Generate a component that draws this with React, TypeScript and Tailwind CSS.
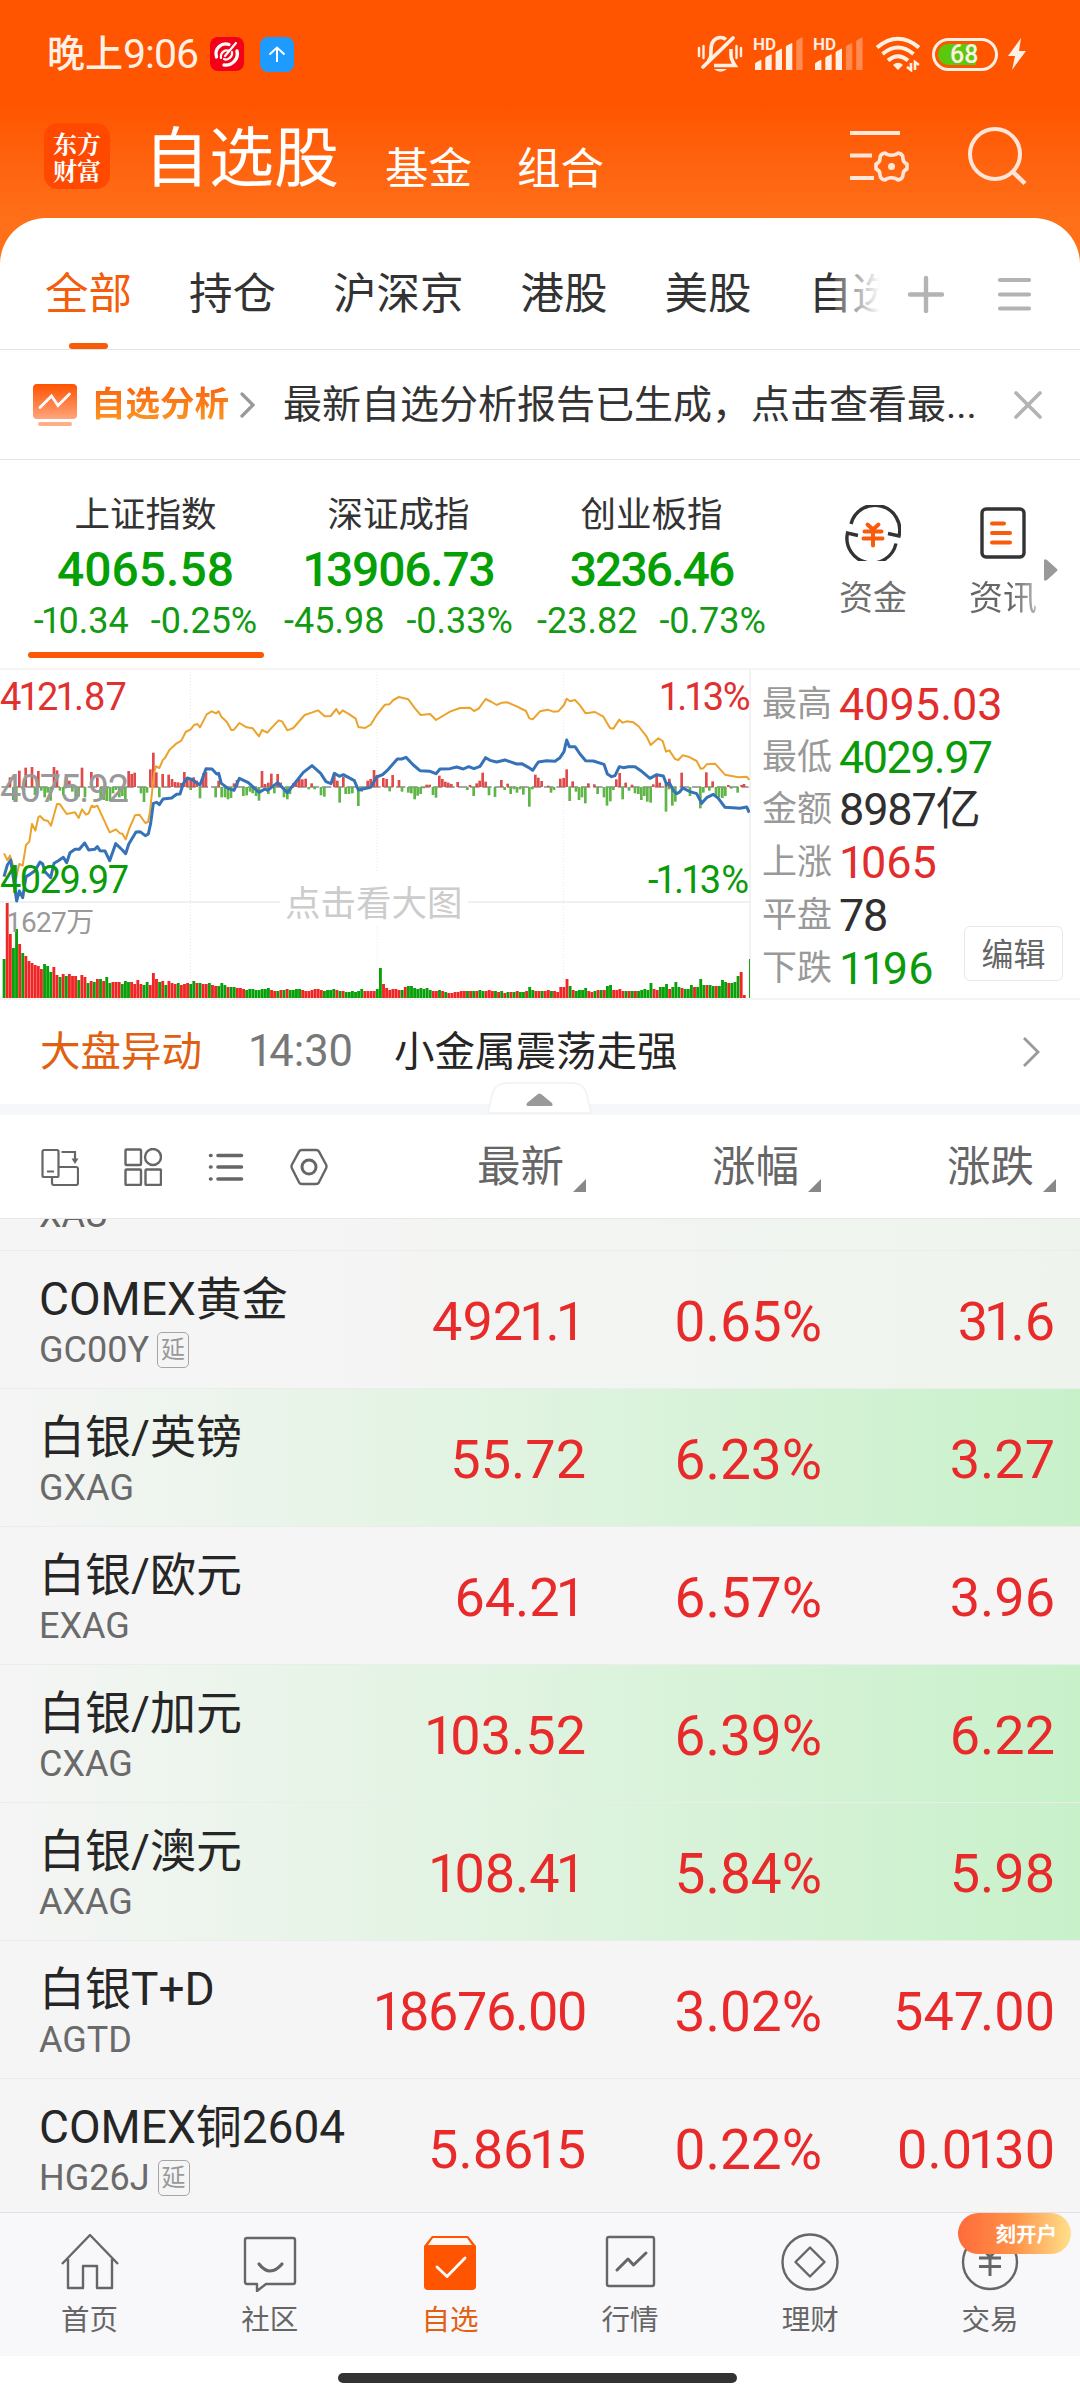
import type { ReactNode } from "react";
import clsx from "clsx";

const tabs = ["全部", "持仓", "沪深京", "港股", "美股", "自选"];

const indices = [
  { name: "上证指数", value: "4065.58", change: "-10.34", pct: "-0.25%", tracking: "tracking-normal", active: true },
  { name: "深证成指", value: "13906.73", change: "-45.98", pct: "-0.33%", tracking: "tracking-[-0.025em]", active: false },
  { name: "创业板指", value: "3236.46", change: "-23.82", pct: "-0.73%", tracking: "tracking-[-0.04em]", active: false },
];

const summary = [
  { label: "最高", value: "4095.03", color: "text-[#e22d2d]" },
  { label: "最低", value: "4029.97", color: "text-[#0a9a0a] tracking-[-0.035em]" },
  { label: "金额", value: "8987亿", color: "text-[#2f2f2f] tracking-[-0.025em]" },
  { label: "上涨", value: "1065", color: "text-[#e22d2d]" },
  { label: "平盘", value: "78", color: "text-[#2f2f2f] tracking-[-0.03em]" },
  { label: "下跌", value: "1196", color: "text-[#0a9a0a]" },
];

const rows = [
  { name: "COMEX黄金", code: "GC00Y", delayed: true, last: "4921.1", pct: "0.65%", diff: "31.6", bg: "bg-linear-to-r from-[#f5f5f5] from-20% to-[#eef4ed]" },
  { name: "白银/英镑", code: "GXAG", last: "55.72", pct: "6.23%", diff: "3.27", bg: "bg-linear-to-r from-[#f5f5f5] to-[#c8f1ca]" },
  { name: "白银/欧元", code: "EXAG", last: "64.21", pct: "6.57%", diff: "3.96", bg: "bg-[#f5f5f6]" },
  { name: "白银/加元", code: "CXAG", last: "103.52", pct: "6.39%", diff: "6.22", bg: "bg-linear-to-r from-[#f5f5f5] to-[#c8f1ca]" },
  { name: "白银/澳元", code: "AXAG", last: "108.41", pct: "5.84%", diff: "5.98", bg: "bg-linear-to-r from-[#f5f5f5] to-[#c8f1ca]" },
  { name: "白银T+D", code: "AGTD", last: "18676.00", pct: "3.02%", diff: "547.00", tight: true, bg: "bg-[#f5f5f6]" },
  { name: "COMEX铜2604", code: "HG26J", delayed: true, last: "5.8615", pct: "0.22%", diff: "0.0130", bg: "bg-[#f5f5f5]" },
];

// Chart data is kept at 3x, baseline of the deviation bars is y=381
const avgLine =
  "12,580 22,600 30,587 38,612 48,655 58,612 68,617 78,555 88,545 96,492 106,512 115,472 120,468 132,480 144,483 153,497 171,432 180,433 200,462 225,457 236,474 246,448 258,464 266,460 275,437 283,441 292,437 329,517 348,508 360,520 367,521 377,538 388,505 405,466 418,464 436,489 444,486 450,455 462,340 468,319 478,324 489,299 495,294 508,270 530,250 544,242 557,216 572,208 582,195 592,192 600,202 620,163 635,154 648,160 656,154 664,170 680,185 694,210 702,209 718,189 740,202 758,205 777,229 786,210 802,218 816,202 836,181 846,184 862,211 880,204 914,165 935,158 954,151 974,169 992,168 1009,147 1018,162 1028,151 1048,163 1067,176 1075,201 1095,204 1112,194 1130,165 1155,134 1168,133 1180,120 1197,111 1225,118 1245,145 1262,165 1290,162 1308,180 1350,155 1380,144 1410,143 1422,153 1436,146 1457,117 1475,126 1490,135 1506,128 1522,127 1550,139 1578,153 1588,175 1598,178 1620,154 1643,149 1660,155 1675,154 1692,135 1700,116 1710,124 1725,120 1740,136 1757,160 1785,156 1810,170 1830,204 1840,206 1858,179 1868,188 1880,184 1900,187 1915,198 1940,230 1952,255 1975,235 1988,243 1998,275 2008,271 2025,297 2035,300 2048,286 2065,290 2090,303 2102,326 2110,325 2120,313 2145,311 2175,344 2215,352 2240,350 2248,360";

const priceLine =
  "12,650 22,615 32,600 38,640 50,723 58,693 68,713 78,650 90,643 105,632 120,606 128,612 135,635 152,653 162,610 175,602 190,592 200,608 210,578 225,568 238,568 254,549 266,570 284,568 292,560 300,572 315,573 329,602 347,551 367,570 377,581 386,553 408,516 420,515 436,527 445,522 452,490 460,430 470,427 478,434 489,417 515,414 530,403 540,402 550,370 562,354 575,358 600,375 618,326 636,327 650,342 656,340 664,370 684,385 702,391 718,355 745,368 777,397 795,387 803,391 833,368 862,398 910,337 936,317 962,340 978,365 993,371 1003,340 1018,349 1030,344 1063,362 1075,390 1085,388 1112,382 1130,351 1148,344 1165,328 1192,297 1205,297 1218,292 1240,315 1260,332 1290,334 1308,341 1320,327 1350,326 1370,321 1390,327 1406,320 1422,326 1440,319 1457,293 1470,301 1490,306 1515,300 1550,312 1565,311 1585,322 1598,331 1615,306 1640,302 1665,304 1680,293 1692,275 1700,240 1708,260 1725,260 1740,282 1757,302 1780,303 1812,313 1822,342 1835,350 1845,347 1858,320 1870,323 1885,320 1905,320 1925,334 1950,355 1970,344 1990,348 2000,374 2008,368 2020,392 2030,401 2040,395 2048,384 2070,395 2090,401 2105,430 2120,413 2140,403 2155,415 2175,442 2220,445 2240,441 2248,458";

const upBars =
  "30,352 58,332 77,323 96,321 115,333 162,321 171,331 199,352 208,362 246,323 274,336 292,352 386,333 395,342 404,338 451,328 460,278 469,337 488,342 506,344 516,357 525,366 534,367 543,369 553,336 562,353 572,358 581,352 590,362 610,340 618,336 656,362 702,370 711,360 786,333 795,372 805,368 814,341 833,342 842,368 880,370 889,362 898,355 907,358 917,356 935,370 1003,345 1012,362 1030,350 1103,362 1112,357 1122,330 1131,345 1150,354 1160,357 1178,345 1197,360 1280,374 1289,374 1318,347 1327,357 1336,365 1345,368 1354,372 1373,366 1410,375 1430,370 1439,362 1448,338 1457,365 1504,360 1523,371 1606,344 1615,353 1625,363 1645,377 1681,356 1691,354 1700,328 1718,364 1765,370 1783,373 1849,358 1859,339 1877,368 1896,374 1960,373 1970,346 1979,368 1998,371 2008,356 2045,338 2119,337 2138,364 2185,375 2225,375 2232,372";

const downBars =
  "40,420 49,425 68,388 105,405 124,392 134,412 143,398 152,422 180,392 190,405 217,395 227,420 236,410 255,412 302,418 311,420 320,423 330,424 339,400 348,390 358,412 367,408 376,425 423,400 432,426 441,398 478,412 572,390 600,415 647,412 665,412 675,412 684,418 693,414 730,408 740,406 750,395 758,400 768,408 777,422 805,402 823,400 852,412 862,418 870,402 926,388 944,388 963,406 973,410 1019,428 1037,402 1047,402 1057,400 1075,438 1085,395 1169,394 1206,395 1225,398 1234,400 1244,418 1253,407 1262,402 1271,385 1299,405 1308,413 1402,390 1421,408 1467,406 1485,411 1514,390 1532,402 1542,388 1551,398 1560,388 1570,404 1588,440 1597,388 1653,398 1662,390 1709,423 1728,395 1737,420 1746,412 1756,430 1793,402 1812,412 1821,437 1831,424 1840,390 1868,418 1887,392 1905,400 1915,402 1924,420 1933,408 1942,425 1952,428 1998,455 2007,388 2017,437 2026,425 2070,408 2101,445 2110,398 2128,392 2148,405 2157,412 2167,414 2176,408 2194,386 2213,398";

const volume =
  "39g 95r 64r 50g 69g 54r 45g 42r 37r 35r 33r 32r 29r 34g 32g 26g 31r 23r 21g 24r 22g 24r 22r 22r 18g 23r 21r 15g 17r 16g 19r 19g 17r 21g 15g 16r 16r 16r 14g 17g 16g 16r 14r 18r 14r 13g 16g 13r 25r 19r 16g 17r 13g 17r 15r 14r 15g 13r 14r 15r 14g 17g 15r 15g 14r 14r 15g 13r 12r 12g 15g 13g 11r 11g 11g 10r 10r 9r 8g 9g 9g 8g 8g 9g 9g 10g 8r 7r 7g 8r 8g 9r 8g 8g 9g 9g 8r 7r 7r 8r 9r 9r 8r 7g 8g 8g 9g 8r 7g 7r 6g 6g 7g 6g 7g 9g 7r 7r 7r 7r 9g 30g 14r 10r 8r 9r 9r 8r 8g 11r 12g 12g 10g 9g 10g 9g 10g 8g 7r 7r 8g 7r 6g 5r 5r 6r 6r 7r 7r 7g 7r 7g 7r 8g 7g 7r 8r 7r 7g 6r 7g 5r 6g 6r 6g 7r 6g 6g 7r 11g 8g 7r 7r 7g 7r 8r 7g 7r 6r 11r 11r 19r 12g 8r 7g 8g 8g 10g 7r 6r 7g 8r 8g 8r 12g 13g 8r 8r 9r 7r 7g 7r 7g 7r 7g 8g 9g 8g 15g 9r 8r 11g 11g 14g 9r 11g 16g 11g 10r 9g 9g 13g 11r 11g 19g 13g 13r 13g 12g 12r 12g 18g 16g 15r 15g 16g 22g 26r 3r 0r 39g"
    .split(" ")
    .map((v) => ({ h: parseInt(v), up: v.endsWith("r") }));

const pairs = (s: string) => s.split(" ").map((p) => p.split(",").map(Number));

// Tightens the spacing round the figure 1 and after "7." so that numbers read as proportional
function Num({ children }: { children: string }) {
  return (
    <>
      {children.split(/([^1](?=1)|1(?=.)|7(?=\.))/).map((part, i) =>
        i % 2 === 1 ? (
          <span key={i} className="tracking-[-0.075em]">
            {part}
          </span>
        ) : (
          part
        ),
      )}
    </>
  );
}

function Signal({ strength }: { strength: number }) {
  return (
    <div className="relative h-9 w-[50px]">
      <span className="absolute top-0 left-0 text-[17px] leading-4 font-semibold">HD</span>
      <svg className="absolute top-0 left-0" width="50" height="36" viewBox="0 0 50 36">
        {[0, 1, 2, 3, 4].map((i) => (
          <path
            key={i}
            d={`M${2 + i * 10.3} 34V${28 - i * 5.6}q0-1 1-1.6l4.4-2.4q1-.4 1 .8V34z`}
            fill="#fff0e6"
            opacity={i < strength ? 1 : 0.35}
          />
        ))}
      </svg>
    </div>
  );
}

function StatusBar() {
  return (
    <div className="flex h-[108px] items-center pr-[54px] pl-[47px] text-[#fff0e6]">
      <div className="flex w-[163px] items-center leading-none">
        <span className="text-[38px] font-medium">晚上</span>
        <span className="text-[41px] tracking-tight">9:06</span>
      </div>
      <svg width="34" height="34" viewBox="0 0 34 34">
        <rect width="34" height="34" rx="8" fill="#f40018" />
        <g fill="none" stroke="#fff" strokeLinecap="round">
          <path d="M6.500 20C4 11 12 5 19 7.500" strokeWidth="3.200" />
          <path d="M27 14c2 8-5 15-13 14" strokeWidth="3.400" />
          <path d="M11 21c-1-6 5-9 8-7M22 15c1 5-5 9-8 7M15 19L26 6" strokeWidth="2.200" />
        </g>
      </svg>
      <svg className="ml-4" width="34" height="35" viewBox="0 0 34 35">
        <rect width="34" height="35" rx="8" fill="#1e9bff" />
        <path d="M17 25V10.500M9.500 17.500L17 10.500l7.500 7" fill="none" stroke="#fff" strokeWidth="2" />
      </svg>

      <svg className="ml-auto" width="46" height="38" viewBox="0 0 46 38" fill="none" stroke="#fff0e6">
        <path d="M11 26.500c3-3 3-6 3-12C14 7 18 2.500 23.500 2.500c2 0 4 .7 5.500 2M34 14v6c0 4 1 6 4 10.500H17" strokeWidth="3.600" />
        <path d="M36 3L6 32" strokeWidth="3.800" strokeLinecap="round" />
        <path d="M2 13v8M6.500 11v12M39.500 11v12M44 13v8" strokeWidth="2.400" strokeLinecap="round" />
        <path d="M17 34h13q-6.500 5.500-13 0z" fill="#fff0e6" stroke="none" />
      </svg>
      <div className="ml-[10px] flex gap-[10px]">
        <Signal strength={4} />
        <Signal strength={3} />
      </div>
      <svg className="ml-[12px]" width="46" height="36" viewBox="0 0 46 36" fill="none" stroke="#fff0e6" strokeWidth="4">
        <path d="M2 11.500Q23-6 44 11.500M7.500 18q15.500-13 31 0M13 24.500q10-8.500 20 0" />
        <path d="M23 34l-5-5q5-4.500 10 0z" fill="#fff0e6" stroke="none" />
        <path d="M36 27v7l-4-3M40 34v-8l4 3" strokeWidth="2.600" />
      </svg>
      <div className="ml-[11px] flex h-[33px] w-[66px] items-center rounded-full border-[3px] border-[#fff0e6] p-[3px]">
        <div className="h-[21px] w-[38px] rounded-l-full bg-[#5cc80c]" />
        <span className="-ml-[26px] text-[25px] leading-none font-medium">68</span>
      </div>
      <svg className="ml-[10px]" width="18" height="32" viewBox="0 0 18 32" fill="#fff0e6">
        <path d="M13 0L0 18h7L4 32 18 13h-7z" />
      </svg>
    </div>
  );
}

function Header() {
  return (
    <div className="h-[264px] bg-linear-to-b from-[#ff5500] from-40% to-[#ff7019] to-85%">
      <StatusBar />
      <div className="flex h-[96px] items-center pr-[53px] pl-[44px] text-white">
        <div className="flex h-[66px] w-[66px] flex-col items-center justify-center rounded-[14px] bg-[#ff4800] font-[family-name:'Noto_Serif_CJK_SC','Noto_Sans_CJK_SC',serif] text-[24px] leading-[27px] font-bold">
          <span>东方</span>
          <span>财富</span>
        </div>
        <span className="mt-[6px] ml-[34px] text-[65px] leading-none">自选股</span>
        <span className="mt-[27px] ml-[46px] text-[43.500px] leading-none">基金</span>
        <span className="mt-[27px] ml-[45px] text-[43.500px] leading-none">组合</span>
        <svg className="ml-auto" width="60" height="56" viewBox="0 0 60 56" fill="none" stroke="#ffe6d8" strokeWidth="4">
          <path d="M1 5h50M1 27.500h22M1 50h24" />
          <path
            d="M36 25c3 3 10 3 13 0 3.500.5 5 2.500 5 5.500 0 3 1.500 4.500 4 5.500v5c-2.500 1-4 2.500-4 5.500 0 3-1.500 5-5 5.500-3-3-10-3-13 0-3.500-.5-5-2.500-5-5.500 0-3-1.500-4.500-4-5.500v-5c2.500-1 4-2.500 4-5.500 0-3 1.500-5 5-5.500z"
            strokeWidth="3.600"
            strokeLinejoin="round"
          />
          <circle cx="42.500" cy="38.500" r="3.500" fill="#ffe6d8" stroke="none" />
        </svg>
        <svg className="ml-[58px]" width="60" height="60" viewBox="0 0 60 60" fill="none" stroke="#ffe6d8" strokeWidth="4">
          <circle cx="28" cy="28" r="25" />
          <path d="M45 45l13 12.500" strokeWidth="4.500" />
        </svg>
      </div>
    </div>
  );
}

function TabBar() {
  return (
    <div className="flex h-[132px] items-center border-b border-[#e4e4e4] pr-[48px] pl-[45px]">
      <div className="relative flex h-full w-[835px] items-center gap-[57px] overflow-hidden pt-[23px] text-[43.500px] leading-none whitespace-nowrap text-[#333]">
        {tabs.map((t, i) => (
          <span key={t} className={clsx("relative", i === 0 && "text-[#f45d0c]")}>
            {t}
          </span>
        ))}
        <div className="absolute bottom-0 left-6 h-[6px] w-[39px] rounded-full bg-[#f95a08]" />
        <div className="absolute inset-y-0 right-0 w-[45px] bg-linear-to-r from-white/20 to-white" />
      </div>
      <svg className="mt-[20px] ml-[27px]" width="38" height="38" viewBox="0 0 38 38" stroke="#b3b3b3" strokeWidth="4.400" strokeLinecap="round">
        <path d="M19 3v33M3 19.500h32" />
      </svg>
      <svg className="mt-[20px] ml-auto" width="36" height="38" viewBox="0 0 36 38" stroke="#b3b3b3" strokeWidth="4.200" strokeLinecap="round">
        <path d="M4 5h29M4 19.500h29M4 33.500h29" />
      </svg>
    </div>
  );
}

function AnalysisBar() {
  return (
    <div className="flex h-[110px] items-center border-b border-[#e4e4e4] pr-[37px] pl-[33px]">
      <svg width="44" height="42" viewBox="0 0 44 42">
        <defs>
          <linearGradient id="analysis" x1="0" y1="0" x2="0" y2="1">
            <stop offset="0" stopColor="#ff5200" />
            <stop offset="1" stopColor="#ffa57c" />
          </linearGradient>
        </defs>
        <rect width="44" height="35" rx="4" fill="url(#analysis)" />
        <path d="M7 23.500L18.500 12l6.500 9.500L36.500 10" fill="none" stroke="#fff" strokeWidth="2.800" strokeLinecap="round" />
        <rect x="5" y="38" width="34" height="4" rx="2" fill="#ffae88" />
      </svg>
      <span className="ml-[14px] bg-linear-to-b from-[#f9600f] to-[#fb9a22] bg-clip-text text-[34.500px] leading-[1.2] font-bold text-transparent">
        自选分析
      </span>
      <svg className="ml-[11px]" width="16" height="28" viewBox="0 0 16 28" fill="none" stroke="#999" strokeWidth="3.200" strokeLinecap="round">
        <path d="M2 3l11 11L2 25" />
      </svg>
      <span className="mt-[2px] ml-[27px] text-[39px] leading-none whitespace-nowrap text-[#333]">
        最新自选分析报告已生成，点击查看最...
      </span>
      <svg className="ml-auto" width="30" height="30" viewBox="0 0 30 30" stroke="#b3b3b3" strokeWidth="3.600" strokeLinecap="round">
        <path d="M3 3l24 24M27 3L3 27" />
      </svg>
    </div>
  );
}

function IndexStrip() {
  return (
    <div className="flex h-[210px] border-b-2 border-[#f4f4f5] pl-[19px]">
      {indices.map((x) => (
        <div key={x.name} className="flex w-[253px] flex-col items-center pt-[38px] leading-none whitespace-nowrap text-[#129a12]">
          <span className="text-[35.500px] text-[#333]">{x.name}</span>
          <span className={clsx("mt-[12px] text-[48px] font-medium text-[#05a005]", x.tracking)}>
            <Num>{x.value}</Num>
          </span>
          <div className="mt-[9px] flex gap-[22px] text-[36px]">
            <span>
              <Num>{x.change}</Num>
            </span>
            <span>{x.pct}</span>
          </div>
          {x.active && <div className="mt-[13px] h-[6px] w-[236px] rounded-full bg-[#fb5707]" />}
        </div>
      ))}
      <div className="flex flex-1 items-start pt-[45px]">
        <div className="ml-[61px] flex flex-col items-center">
          <svg width="56" height="56" viewBox="0 0 56 56" fill="none" stroke="#333" strokeWidth="3.400">
            <path d="M6 19a24.500 24.500 0 0 1 48 12L43 28.500" />
            <path d="M51 38.500A24.500 24.500 0 0 1 2.500 28l10.500 2.500" />
            <path d="M22.500 19.500l5.500 5 5.500-5M19.500 26.500h17M18.500 33.500h19M28 25v15.500" stroke="#fa5b0a" strokeWidth="4" strokeLinecap="round" />
          </svg>
          <span className="mt-[20px] text-[34px] leading-none text-[#6f6f6f]">资金</span>
        </div>
        <div className="ml-[62px] flex flex-col items-center">
          <svg width="56" height="56" viewBox="0 0 56 56" fill="none" stroke="#333" strokeWidth="3.400">
            <rect x="7" y="4" width="42" height="48" rx="4" />
            <path d="M17 18.500h12M17 28h18M17 37.500h18" stroke="#fa5b0a" strokeWidth="4" strokeLinecap="round" />
          </svg>
          <span className="mt-[20px] bg-linear-to-r from-[#666] from-60% to-[#b5b5b5] bg-clip-text text-[34px] leading-none text-transparent">
            资讯
          </span>
        </div>
        <svg className="mt-[53px] ml-[7px]" width="14" height="24" viewBox="0 0 14 24" fill="#999">
          <path d="M0 3q0-3 3-1l10 9q1 1 0 2L3 22q-3 2-3-1z" />
        </svg>
      </div>
    </div>
  );
}

function MarketChart() {
  return (
    <div className="relative h-[328px] w-[751px] border-r-2 border-[#f2f2f3] text-[38px] leading-none tracking-[-0.04em]">
      <svg className="absolute inset-0" width="750" height="328" viewBox="0 30 2250 984">
        <g stroke="#e9e9ec" strokeWidth="3" strokeDasharray="3 6">
          <path d="M571 36V1014M1131 36V640M1131 800V1014M1690 36V1014" />
        </g>
        <path d="M0 726H840M1404 726H2250" stroke="#ececee" strokeWidth="5" />
        <path d="M4 381H2246" stroke="#8a8a8a" strokeWidth="4" strokeDasharray="28 9" />
        {pairs(upBars).map(([x, y]) => (
          <rect key={x} x={x - 4} y={y} width="8" height={381 - y} fill="#e04a4a" />
        ))}
        {pairs(downBars).map(([x, y]) => (
          <rect key={x} x={x - 4} y="381" width="8" height={y - 381} fill="#5fb548" />
        ))}
        {volume.map((v, i) => (
          <rect key={i} x={8 + i * 9.33} y={1014 - v.h * 3} width="8.600" height={v.h * 3} fill={v.up ? "#f02626" : "#08a008"} />
        ))}
        <polyline points={avgLine} fill="none" stroke="#eba32c" strokeWidth="6" strokeLinejoin="round" />
        <polyline points={priceLine} fill="none" stroke="#3572b8" strokeWidth="9" strokeLinejoin="round" />
      </svg>
      <span className="absolute top-[8px] left-0 tracking-normal text-[#e03030]">
        <Num>4121.87</Num>
      </span>
      <span className="absolute top-[8px] right-0 text-[#e03030]">
        <Num>1.13%</Num>
      </span>
      <span className="absolute top-[100px] left-0 text-[#999]">4075.92</span>
      <span className="absolute top-[191px] left-0 text-[#0a9a0a]">4029.97</span>
      <span className="absolute top-[191px] right-0 tracking-normal text-[#0a9a0a]">
        <Num>-1.13%</Num>
      </span>
      <span className="absolute top-[239px] left-[6px] text-[28px] tracking-tight text-[#999]">1627万</span>
      <span className="absolute top-[217px] left-[285px] text-[35.500px] tracking-normal text-[#ccc]">点击看大图</span>
    </div>
  );
}

function SummaryPanel() {
  return (
    <div className="relative flex-1 pt-[8px] pl-[11px]">
      {summary.map((s) => (
        <div key={s.label} className="flex h-[52.800px] items-center leading-none">
          <span className="w-[77px] text-[35px] text-[#999]">{s.label}</span>
          <span className={clsx("text-[45px]", s.color)}>
            <Num>{s.value}</Num>
          </span>
        </div>
      ))}
      <div className="absolute right-[17px] bottom-[17px] flex h-[55px] w-[99px] items-center justify-center rounded-md border border-[#e8e8e8] bg-white pt-[2px] text-[32px] leading-none text-[#666]">
        编辑
      </div>
    </div>
  );
}

function NewsRow() {
  return (
    <div className="relative flex h-[117px] items-center border-t-2 border-b-[11px] border-t-[#f4f4f5] border-b-[#f5f7fa] pr-[40px] pl-[40px] text-[40.500px] leading-none">
      <span className="text-[#e0600f]">大盘异动</span>
      <span className="ml-[46px] w-[104px] text-[43.500px] text-[#777]">
        <Num>14:30</Num>
      </span>
      <span className="ml-[42px] text-[#262626]">小金属震荡走强</span>
      <svg className="ml-auto" width="18" height="32" viewBox="0 0 18 32" fill="none" stroke="#999" strokeWidth="2.800">
        <path d="M2 2l14 14L2 30" />
      </svg>
      <svg className="absolute -bottom-[10px] left-[487px]" width="105" height="32" viewBox="0 0 105 32">
        <path d="M1 31L5 13Q8 1 20 1H85q12 0 15 12l4 18z" fill="#fff" stroke="#f0f1f3" strokeWidth="1.500" />
        <path d="M40 21L51 12q1.500-1 3 0L65 21q1.500 3-1 3H41q-2.500 0-1-3z" fill="#999" />
      </svg>
    </div>
  );
}

function ColumnTitle({ children }: { children: ReactNode }) {
  return (
    <div className="flex items-center justify-end pt-[2px] text-[43.500px] leading-none text-[#666]">
      {children}
      <svg className="mt-[36px] ml-[9px]" width="13" height="13" viewBox="0 0 13 13" fill="#888">
        <path d="M13 0v13H0z" />
      </svg>
    </div>
  );
}

function ListHeader() {
  return (
    <div className="grid h-[104px] grid-cols-[345px_241px_235px_235px] items-center border-b border-[#e8e8e8]">
      <div className="flex gap-[45px] pl-[41px]">
        <svg width="38" height="38" viewBox="0 0 38 38" fill="none" stroke="#666" strokeWidth="2.200">
          <rect x="1.500" y="2" width="16" height="27" rx="1.500" />
          <path d="M6 23.500h7M17.500 19H35q2 0 2 2v14q0 2-2 2H13q-2 0-2-2v-5.500M20.500 4H34v9" />
          <path d="M30.500 10.500h7L34 16z" fill="#666" stroke="none" />
        </svg>
        <svg width="38" height="38" viewBox="0 0 38 38" fill="none" stroke="#666" strokeWidth="2.400">
          <rect x="1.500" y="1.500" width="15.500" height="15.500" rx="1" />
          <circle cx="29" cy="9" r="8" />
          <rect x="1.500" y="21.500" width="15.500" height="15.500" rx="1" />
          <rect x="21.500" y="21.500" width="15.500" height="15.500" rx="1" />
        </svg>
        <svg width="38" height="38" viewBox="0 0 38 38" stroke="#666" strokeWidth="3.600" strokeLinecap="round">
          <path d="M11 7.500h23.500M11 19h23.500M11 31h23.500M3.500 7.500h.5M3.500 19h.5M3.500 31h.5" />
        </svg>
        <svg width="38" height="38" viewBox="0 0 38 38" fill="none" stroke="#666" strokeWidth="2.400" strokeLinejoin="round">
          <path d="M12 2h14q2 0 3 1.700l7 12.800q1 2 0 4l-7 13.800q-1 1.700-3 1.700H12q-2 0-3-1.700L2 20.500q-1-2 0-4L9 3.700Q10 2 12 2z" />
          <circle cx="19" cy="19" r="7" strokeWidth="3" />
        </svg>
      </div>
      <ColumnTitle>最新</ColumnTitle>
      <ColumnTitle>涨幅</ColumnTitle>
      <ColumnTitle>涨跌</ColumnTitle>
    </div>
  );
}

function WatchList() {
  return (
    <div className="h-[993px] overflow-hidden">
      <div className="flex h-[32px] items-end overflow-hidden border-b border-[#ebecec] bg-linear-to-r from-[#f5f5f5] from-20% to-[#eef4ed] pb-[17px] pl-[39px] text-[36px] leading-none text-[#666]">
        XAU
      </div>
      {rows.map((r) => (
        <div
          key={r.code}
          className={clsx(
            "grid h-[138px] grid-cols-[306px_241px_236px_233px] items-center border-b border-[#ebecec] pt-[5px] pl-[39px] text-right text-[54px] leading-none text-[#e92a2a]",
            r.bg,
          )}
        >
          <div className="text-left whitespace-nowrap">
            <div className="text-[46px] text-[#262626]">{r.name}</div>
            <div className="mt-[10px] flex h-[36px] items-center gap-[8px] text-[36px] text-[#6a6a6a]">
              {r.code}
              {r.delayed && (
                <span className="flex h-[36px] w-[32px] items-center justify-center rounded-[5px] border border-[#a5a5a5] text-[24px] text-[#999]">
                  延
                </span>
              )}
            </div>
          </div>
          <span className={clsx(r.tight && "tracking-[-0.025em]")}>
            <Num>{r.last}</Num>
          </span>
          <span className="text-[55px]">{r.pct}</span>
          <span>
            <Num>{r.diff}</Num>
          </span>
        </div>
      ))}
    </div>
  );
}

function NavItem({ label, active, children }: { label: string; active?: boolean; children: ReactNode }) {
  return (
    <div className={clsx("relative flex flex-1 flex-col items-center pt-[17px] pr-px", active ? "text-[#e2600f]" : "text-[#666]")}>
      <svg width="60" height="62" viewBox="0 0 60 62" fill="none" stroke="#666" strokeWidth="2.400" strokeLinejoin="round">
        {children}
      </svg>
      <span className="mt-[15px] text-[28.500px] leading-none">{label}</span>
    </div>
  );
}

function BottomNav() {
  return (
    <div className="flex h-[144px] border-t border-[#dfe0e3] bg-[#f8f8fa]">
      <NavItem label="首页">
        <path d="M2 34L30 5l28 29M8 29v29h15V36h14v22h15V29" />
      </NavItem>
      <NavItem label="社区">
        <path d="M7 8h46q2 0 2 2v42q0 2-2 2H26l-9 7v-7H7q-2 0-2-2V10q0-2 2-2z" />
        <path d="M19 34q11 14 23 0" strokeWidth="3.200" strokeLinecap="round" />
      </NavItem>
      <NavItem label="自选" active>
        <path d="M4 16L12 6h36l8 10v40q0 4-4 4H8q-4 0-4-4z" fill="#ff5500" stroke="none" />
        <path d="M8 15l5-7h34l5 7z" fill="#fff8f4" stroke="none" />
        <path d="M17 37l10 9.500L45 28" stroke="#fff" strokeWidth="2.800" strokeLinecap="round" />
      </NavItem>
      <NavItem label="行情">
        <rect x="7" y="7" width="47" height="49" rx="2" />
        <path d="M17 40l11-11 5.500 6L46 23" strokeWidth="3" strokeLinecap="round" />
      </NavItem>
      <NavItem label="理财">
        <circle cx="30" cy="32" r="27.500" />
        <path d="M30 17.500L44.500 32 30 46.500 15.500 32z" />
      </NavItem>
      <div className="relative flex flex-1">
        <NavItem label="交易">
          <circle cx="30" cy="32" r="27" />
          <path d="M22 18l8 9 8-9M19 28h22M19 36.500h22M30 27v19" strokeWidth="3" />
        </NavItem>
        <div className="absolute top-0 right-[9px] flex h-[41px] w-[113px] items-center justify-end rounded-full bg-linear-to-r from-[#ff6a3a] via-[#ff9248] to-[#ffe08a] pt-[3px] pr-[14px] text-[20.500px] leading-none font-bold text-white">
          刻开户
        </div>
      </div>
    </div>
  );
}

export default function App() {
  return (
    <div className="h-[2400px] w-[1080px] overflow-hidden bg-white font-[family-name:Roboto,'Noto_Sans_CJK_SC',sans-serif]">
      <Header />
      <div className="relative -mt-[46px] rounded-t-[46px] bg-white">
        <TabBar />
        <AnalysisBar />
        <IndexStrip />
        <div className="flex">
          <MarketChart />
          <SummaryPanel />
        </div>
        <NewsRow />
        <ListHeader />
        <WatchList />
        <BottomNav />
        <div className="flex h-[44px] justify-center pt-[17px] pr-[6px]">
          <div className="h-[10px] w-[399px] rounded-full bg-[#333]" />
        </div>
      </div>
    </div>
  );
}
